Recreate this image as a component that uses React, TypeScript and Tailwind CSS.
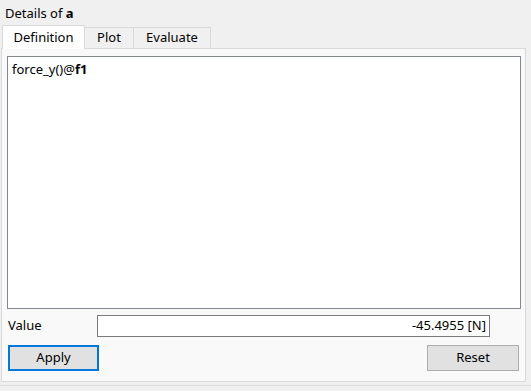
export default function App() {
  return (
    <div
      className="relative h-[391px] w-[531px] overflow-hidden bg-[#f0f0f0] text-[13px] text-black"
      style={{ fontFamily: '"Noto Sans", "Open Sans", sans-serif' }}
    >
      {/* header */}
      <div className="h-[25px] pl-[5px] pt-[4px] leading-[18px]">
        Details of <span className="font-bold">a</span>
      </div>

      {/* tabs */}
      <div className="flex h-[23px] items-end pl-[2px]">
        <div className="relative z-10 -mb-px flex h-[24px] w-[83px] items-center justify-center border border-b-0 border-[#d9d9d9] bg-white">
          Definition
        </div>
        <div className="flex h-[21px] w-[49px] items-center justify-center border border-l-0 border-b-0 border-[#d9d9d9] bg-[#f0f0f0]">
          Plot
        </div>
        <div className="flex h-[21px] w-[77px] items-center justify-center border border-l-0 border-b-0 border-[#d9d9d9] bg-[#f0f0f0]">
          Evaluate
        </div>
      </div>

      {/* pane */}
      <div className="ml-[1px] flex h-[334px] w-[525px] flex-col border border-[#d9d9d9] bg-[#f9f9f9] px-[5px] pt-[7px]">
        <div className="h-[253px] w-[514px] border border-[#828790] bg-white px-[4px] pt-[3px] leading-[18px]">
          force_y()@<span className="font-bold">f1</span>
        </div>

        <div className="mt-[6px] flex h-[22px] items-center">
          <span className="w-[90px] pl-[1px]">Value</span>
          <div className="flex h-[22px] w-[393px] items-center justify-end border border-[#7a7a7a] bg-white pr-[3px]">
            -45.4955 [N]
          </div>
        </div>

        <div className="mt-[8px] flex items-center justify-between pr-[1px]">
          <button className="ml-[1px] h-[26px] w-[91px] border-2 border-[#0078d7] bg-[#e1e1e1]">
            Apply
          </button>
          <button className="h-[26px] w-[92px] border border-[#adadad] bg-[#e1e1e1]">
            Reset
          </button>
        </div>
      </div>

      <div className="mt-[3px] h-[10px] border-t border-[#dcdcdc] bg-[#f0f0f0]" />
    </div>
  );
}
